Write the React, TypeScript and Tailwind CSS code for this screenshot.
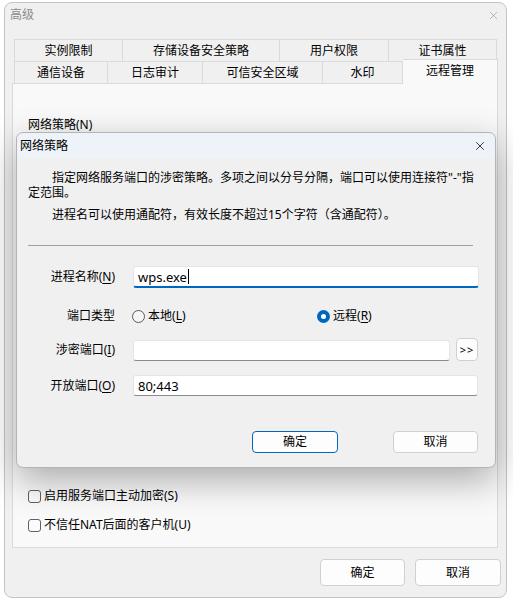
import { X } from "lucide-react";

const backTabs = [
  { label: "实例限制", w: "w-[109px]" },
  { label: "存储设备安全策略", w: "w-[157px]" },
  { label: "用户权限", w: "w-[109px]" },
  { label: "证书属性", w: "w-[108px]" },
];

const frontTabs = [
  { label: "通信设备", w: "w-[94px]" },
  { label: "日志审计", w: "w-[95px]" },
  { label: "可信安全区域", w: "w-[120px]" },
  { label: "水印", w: "w-[80px]" },
];

function Key({ k }: { k: string }) {
  return (
    <>
      (<span className="underline underline-offset-2">{k}</span>)
    </>
  );
}

function Checkbox({ children }: { children: React.ReactNode }) {
  return (
    <div className="flex items-center h-[16px] gap-[3px]">
      <span className="w-[13px] h-[13px] rounded-[3px] border border-[#606060] bg-[#fbfbfb]" />
      <span>{children}</span>
    </div>
  );
}

function Radio({ checked, children }: { checked?: boolean; children: React.ReactNode }) {
  return (
    <div className="flex items-center gap-[3px]">
      {checked ? (
        <span className="w-[13px] h-[13px] rounded-full bg-[#0067c0] flex items-center justify-center">
          <span className="w-[5px] h-[5px] rounded-full bg-white" />
        </span>
      ) : (
        <span className="w-[13px] h-[13px] rounded-full border border-[#5a5a5a] bg-[#f6f6f6]" />
      )}
      <span>{children}</span>
    </div>
  );
}

export default function App() {
  return (
    <div className="relative w-[513px] h-[602px] overflow-hidden bg-white text-[12px] leading-[16px] text-black font-['Noto_Sans','Noto_Sans_CJK_SC',sans-serif]">
      {/* main window */}
      <div className="ml-[4px] mt-[2px] w-[503px] h-[596px] rounded-[8px] border border-[#c4c4c4] bg-[#f0f0f0] flex flex-col">
        <div className="h-[24px] flex items-center justify-between pl-[5px] pr-[6px]">
          <span className="text-[#8a8a8a]">高级</span>
          <X size={13} strokeWidth={1} className="text-[#8a8a8a]" />
        </div>

        {/* tabs */}
        <div className="mt-[12px] ml-[9px] flex flex-col">
          <div className="flex h-[22px]">
            {backTabs.map((t, i) => (
              <div
                key={t.label}
                className={`${t.w} h-full flex items-center justify-center border-t border-r border-[#dadada] ${i === 0 ? "border-l" : ""}`}
              >
                {t.label}
              </div>
            ))}
          </div>
          <div className="flex h-[22px] items-end">
            {frontTabs.map((t, i) => (
              <div
                key={t.label}
                className={`${t.w} h-[22px] flex items-center justify-center border-t border-r border-[#dadada] ${i === 0 ? "border-l" : ""}`}
              >
                {t.label}
              </div>
            ))}
            <div className="relative z-10 w-[95px] h-[25px] -mb-px flex items-start justify-center pt-[3px] border-t border-r border-[#dadada] bg-[#f9f9f9]">
              远程管理
            </div>
          </div>
        </div>

        {/* tab panel */}
        <div className="ml-[7px] w-[486px] h-[465px] border border-[#dadada] bg-[#f9f9f9] flex flex-col pl-[15px]">
          <div className="mt-[33px]">网络策略(N)</div>
          <div className="mt-[355px]">
            <Checkbox>启用服务端口主动加密(S)</Checkbox>
          </div>
          <div className="mt-[13px]">
            <Checkbox>不信任NAT后面的客户机(U)</Checkbox>
          </div>
        </div>

        <div className="mt-[11px] flex justify-end gap-[10px] pr-[5px]">
          <button className="w-[85px] h-[27px] rounded-[4px] border border-[#d0d0d0] bg-[#fdfdfd]">确定</button>
          <button className="w-[86px] h-[27px] rounded-[4px] border border-[#d0d0d0] bg-[#fdfdfd]">取消</button>
        </div>
      </div>

      {/* modal dialog */}
      <div className="absolute left-[16px] top-[132px] w-[480px] h-[336px] rounded-[7px] border border-[#b4b4b4] bg-[#f0f0f0] shadow-[0_12px_36px_rgba(0,0,0,0.32)] flex flex-col">
        <div className="h-[25px] rounded-t-[7px] bg-[#eef3f9] flex items-center justify-between pl-[3px] pr-[8px]">
          <span>网络策略</span>
          <X size={14} strokeWidth={1.3} />
        </div>

        <div className="mt-[12px] pl-[11px] leading-[15px]">
          <p className="indent-[24px]">
            指定网络服务端口的涉密策略。多项之间以分号分隔，端口可以使用连接符"-"指
            <br />
            定范围。
          </p>
          <p className="mt-[7px] indent-[24px]">进程名可以使用通配符，有效长度不超过15个字符（含通配符）。</p>
        </div>

        <div className="mt-[23px] ml-[11px] w-[445px] h-px bg-[#a0a0a0]" />

        <div className="mt-[20px] flex items-center h-[22px]">
          <div className="w-[98px] text-right">
            进程名称<Key k="N" />
          </div>
          <div className="ml-[18px] w-[346px] h-[22px] bg-white border border-[#e5e5e5] border-b-2 border-b-[#0067c0] rounded-[3px] flex items-center pl-[4px] text-[13px]">
            wps.exe
            <span className="ml-px w-px h-[15px] bg-black" />
          </div>
        </div>

        <div className="mt-[17px] flex items-center h-[22px]">
          <div className="w-[98px] text-right">端口类型</div>
          <div className="ml-[17px] w-[185px]">
            <Radio>
              本地<Key k="L" />
            </Radio>
          </div>
          <Radio checked>
            远程<Key k="R" />
          </Radio>
        </div>

        <div className="mt-[11px] flex items-end h-[23px]">
          <div className="w-[98px] text-right self-center">
            涉密端口<Key k="I" />
          </div>
          <div className="ml-[18px] w-[317px] h-[21px] bg-white border border-[#e5e5e5] border-b-[#8a8a8a] rounded-[3px]" />
          <button className="ml-[6px] w-[22px] h-[23px] rounded-[4px] border border-[#d0d0d0] bg-[#fdfdfd] text-[11px] tracking-[1px] leading-none">
            &gt;&gt;
          </button>
        </div>

        <div className="mt-[14px] flex items-center h-[21px]">
          <div className="w-[98px] text-right">
            开放端口<Key k="O" />
          </div>
          <div className="ml-[18px] w-[345px] h-[21px] bg-white border border-[#e5e5e5] border-b-[#8a8a8a] rounded-[3px] flex items-center pl-[4px] text-[13px]">
            80;443
          </div>
        </div>

        <div className="mt-[35px] flex">
          <button className="ml-[235px] w-[86px] h-[22px] rounded-[4px] border border-[#0067c0] bg-[#fdfdfd]">确定</button>
          <button className="ml-[55px] w-[85px] h-[22px] rounded-[4px] border border-[#d0d0d0] bg-[#fdfdfd]">取消</button>
        </div>
      </div>
    </div>
  );
}
